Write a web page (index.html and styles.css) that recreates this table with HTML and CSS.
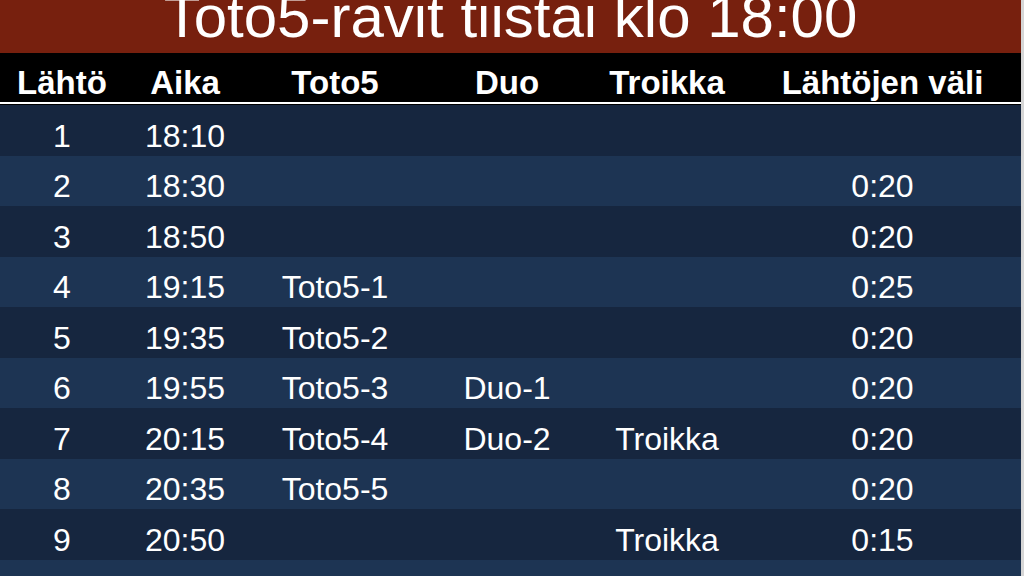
FILE: index.html
```html
<!DOCTYPE html>
<html lang="fi">
<head>
<meta charset="utf-8">
<title>Toto5-ravit</title>
<link rel="stylesheet" href="styles.css">
</head>
<body>
<div class="board">
  <h1 class="title">Toto5-ravit tiistai klo 18:00</h1>
  <div class="row head">
    <div>Lähtö</div><div>Aika</div><div>Toto5</div><div>Duo</div><div>Troikka</div><div>Lähtöjen väli</div>
  </div>
  <div class="sep"></div>
  <div class="row dark"><div>1</div><div>18:10</div><div></div><div></div><div></div><div></div></div>
  <div class="row light"><div>2</div><div>18:30</div><div></div><div></div><div></div><div>0:20</div></div>
  <div class="row dark"><div>3</div><div>18:50</div><div></div><div></div><div></div><div>0:20</div></div>
  <div class="row light"><div>4</div><div>19:15</div><div>Toto5-1</div><div></div><div></div><div>0:25</div></div>
  <div class="row dark"><div>5</div><div>19:35</div><div>Toto5-2</div><div></div><div></div><div>0:20</div></div>
  <div class="row light"><div>6</div><div>19:55</div><div>Toto5-3</div><div>Duo-1</div><div></div><div>0:20</div></div>
  <div class="row dark"><div>7</div><div>20:15</div><div>Toto5-4</div><div>Duo-2</div><div>Troikka</div><div>0:20</div></div>
  <div class="row light"><div>8</div><div>20:35</div><div>Toto5-5</div><div></div><div></div><div>0:20</div></div>
  <div class="row dark"><div>9</div><div>20:50</div><div></div><div>&nbsp;</div><div>Troikka</div><div>0:15</div></div>
  <div class="row light"><div>&nbsp;</div><div></div><div></div><div></div><div></div><div></div></div>
</div>
</body>
</html>
```

FILE: styles.css
```css
html, body {
  margin: 0;
  padding: 0;
  height: 100%;
  overflow: hidden;
}
body {
  background: #d6d6d6;
  font-family: "Liberation Sans", Arial, Helvetica, sans-serif;
  color: #ffffff;
}
.board {
  width: 1021px;
  background: #000;
}
.title {
  margin: 0;
  height: 53px;
  line-height: 33px;
  font-size: 60px;
  font-weight: normal;
  text-align: center;
  background: #77200e;
  color: #ffffff;
  overflow: hidden;
  white-space: nowrap;
}
.row {
  display: grid;
  grid-template-columns: 124px 122px 178px 166px 154px 277px;
  text-align: center;
  white-space: nowrap;
}
.row.head {
  background: #000;
  font-weight: bold;
  font-size: 33px;
  line-height: 33px;
  height: 51px;
  box-sizing: border-box;
  padding-top: 13px;
  border-bottom: 2px solid #ffffff;
}
.sep {
  height: 1px;
  background: #000;
}
.row.dark, .row.light {
  font-size: 32px;
  line-height: 32px;
  height: 50.5px;
  box-sizing: border-box;
  padding-top: 14.5px;
}
.row.dark {
  background: #16263f;
}
.row.light {
  background: #1d3453;
}
```
